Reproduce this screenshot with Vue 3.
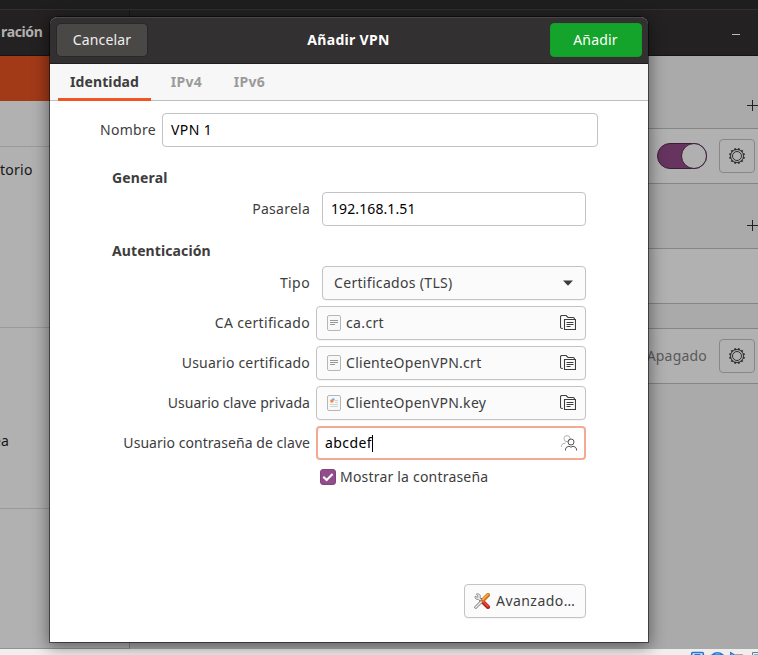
<script setup>
const files = [
  { label: 'CA certificado', name: 'ca.crt', l: 'l-ca', n: 'n-ca' },
  { label: 'Usuario certificado', name: 'ClienteOpenVPN.crt', l: 'l-uc', n: 'n-crt' },
  { label: 'Usuario clave privada', name: 'ClienteOpenVPN.key', l: 'l-uk', n: 'n-key', key: true },
]
const teeth = Array.from({ length: 12 }, (_, i) => i * 30)
</script>

<template>
  <div class="screen">
    <div class="topbar"></div>
    <div class="titlebar">
      <div class="title-side"><span class="t t-conf">ración</span></div>
      <div class="title-main"><i class="minimize"></i></div>
    </div>
    <div class="window">
      <aside class="sidebar">
        <div class="side-row selected"></div>
        <div class="side-row r1"></div>
        <div class="side-row r2"><span class="t t-torio">torio</span></div>
        <div class="side-row r3"><span class="t">ea</span></div>
        <div class="side-row r4"></div>
      </aside>
      <main class="content">
        <div class="gap g1"><svg class="plus" viewBox="0 0 11 11"><path d="M0 5.5H11M5.5 0V11" /></svg></div>
        <div class="band">
          <div class="switch"><i></i></div>
          <div class="gear-btn">
            <svg viewBox="0 0 18 18"><rect v-for="a in teeth" :key="a" x="8" y="1.1" width="2" height="1.6" class="tooth" :transform="`rotate(${a + 15} 9 9)`" /><circle cx="9" cy="9" r="6.5" /><circle cx="9" cy="9" r="4.5" /></svg>
          </div>
        </div>
        <div class="gap g2"><svg class="plus" viewBox="0 0 11 11"><path d="M0 5.5H11M5.5 0V11" /></svg></div>
        <div class="band"></div>
        <div class="gap g3"></div>
        <div class="band">
          <span class="t t-off">Apagado</span>
          <div class="gear-btn">
            <svg viewBox="0 0 18 18"><rect v-for="a in teeth" :key="a" x="8" y="1.1" width="2" height="1.6" class="tooth" :transform="`rotate(${a + 15} 9 9)`" /><circle cx="9" cy="9" r="6.5" /><circle cx="9" cy="9" r="4.5" /></svg>
          </div>
        </div>
      </main>
    </div>
    <footer class="status">
      <svg viewBox="0 0 70 6">
        <path d="M3.7 6V4.5Q3.7 3.5 4.7 3.5H14.3Q15.3 3.5 15.3 4.5V6" fill="#d5e7fb" stroke="#2477d4" stroke-width="1.6" />
        <path d="M6.5 5.5H12.5" fill="none" stroke="#2477d4" />
        <path d="M24 6Q29.5 1.5 35 6Z" fill="#9feaff" stroke="#2477d4" stroke-width="1.5" />
        <path d="M42.7 6V3.7L46.5 6" fill="#7fd6fb" stroke="#2477d4" stroke-width="1.4" />
        <path d="M47 5.5H55" stroke="#aaa" />
        <path d="M64.5 6V3.5H70" fill="none" stroke="#6f7b82" /><path d="M66 5H70V6H66Z" fill="#51c4e8" />
      </svg>
    </footer>

    <section class="dialog">
      <header class="head">
        <button class="cancel"><span class="t t-cancel">Cancelar</span></button>
        <h1 class="t t-title">Añadir VPN</h1>
        <button class="add"><span class="t t-add">Añadir</span></button>
      </header>
      <nav class="tabs">
        <span class="tab active"><span class="t t-id">Identidad</span></span>
        <span class="tab v4"><span class="t t-ip">IPv4</span></span>
        <span class="tab v6"><span class="t t-ip">IPv6</span></span>
      </nav>
      <div class="form">
        <div class="row name-row">
          <label class="t l-nom">Nombre</label>
          <div class="field name"><span class="t n-vpn">VPN 1</span></div>
        </div>
        <h2 class="t h-gen">General</h2>
        <div class="row gateway">
          <label class="t l-pas">Pasarela</label>
          <div class="field short"><span class="t n-gw">192.168.1.51</span></div>
        </div>
        <h2 class="t h-auth">Autenticación</h2>
        <div class="row">
          <label class="t l-tipo">Tipo</label>
          <div class="field short button select"><span class="t n-tls">Certificados (TLS)</span><svg class="arrow" viewBox="0 0 10 6"><path d="M0 0.5H10L5 5.8Z" /></svg></div>
        </div>
        <div v-for="f in files" :key="f.label" class="row">
          <label class="t" :class="f.l">{{ f.label }}</label>
          <div class="field button file">
            <svg class="doc" viewBox="0 0 14 16">
              <rect x="0.5" y="0.5" width="13" height="15" rx="1.5" />
              <template v-if="f.key">
                <path class="faint" d="M8 5.5H11M8 7.5H11M3 9.5H11M3 11.5H11" />
                <circle cx="4.9" cy="6" r="1.8" fill="#f58a4b" /><path d="M5.5 3A2.5 2.5 0 0 1 7.8 5.2H5.5Z" fill="#57aee0" />
              </template>
              <path v-else class="text-lines" d="M3 5.5H11M3 7.5H11M3 9.5H8" />
            </svg>
            <span class="t" :class="f.n">{{ f.name }}</span>
            <svg class="folder" viewBox="0 0 16 16"><path d="M2.8 13.5H2Q0.5 13.5 0.5 12V2Q0.5 0.5 2 0.5H6L8 2.5H13Q14.5 2.5 14.5 4" /><path d="M4.5 4.5H15.5V14.5H4.5Z" /><path d="M6.5 7.5H13.5M6.5 9.5H13.5M6.5 11.5H10.5" /></svg>
          </div>
        </div>
        <div class="row">
          <label class="t l-pw">Usuario contraseña de clave</label>
          <div class="field password"><span class="t n-pw">abcdef</span><i class="caret"></i>
            <svg class="people" viewBox="0 0 16 16"><g class="back"><circle cx="6" cy="3.6" r="3" /><path d="M.5 12V10.5Q.8 8.5 4.5 8" /></g><circle cx="10" cy="7" r="3" /><path d="M4.5 15.5V14Q5 11.7 8 11.2Q10 13.2 12 11.2Q15 11.7 15.5 14V15.5" /></svg>
          </div>
        </div>
        <div class="check-row"><span class="check"><svg viewBox="0 0 14 14"><path d="M2.3 6.8L5.6 10L11.6 4" /></svg></span><span class="t t-show">Mostrar la contraseña</span></div>
        <button class="field button advanced">
          <svg class="tools" viewBox="0 0 16 16">
            <path d="M7 7L14 14" stroke="#b4201c" stroke-width="4" stroke-linecap="round" /><path d="M7.5 6.8L14 13.3" stroke="#ee473b" stroke-width="1.8" stroke-linecap="round" />
            <path d="M1.8 14.2L8 8" stroke="#777" stroke-width="3" stroke-linecap="round" /><path d="M1.8 14.2L8 8" stroke="#eee" stroke-width="1.5" stroke-linecap="round" />
            <path d="M9 7L14 2" stroke="#cd7018" stroke-width="4" stroke-linecap="round" /><path d="M9 6.3L13.8 1.6" stroke="#f5a54a" stroke-width="2" stroke-linecap="round" />
            <path d="M1 3.2L3.5 4.3L4 3L2.2 1Q5 0 6.3 2.3Q6.7 4 6 5L7.5 6.5L6 8L4.5 6.5Q1 7 1 3.2Z" fill="#e5e5e3" stroke="#838383" stroke-width=".8" />
          </svg>
          <span class="t t-adv">Avanzado…</span>
        </button>
      </div>
    </section>
  </div>
</template>

<style>
body { margin: 0; overflow: hidden; }
</style>
<style scoped>
* { box-sizing: border-box; }
.screen { position: relative; width: 758px; height: 655px; overflow: hidden; display: flex; flex-direction: column; background: #aaa; font-family: "Noto Sans", "Open Sans", sans-serif; font-size: 14px; line-height: 20px; color: #3d3d3d; }
.t { white-space: nowrap; display: inline-block; }
h1, h2 { margin: 0; font-size: 14px; font-weight: 700; line-height: 20px; }
button { font: inherit; padding: 0; margin: 0; }
.topbar { height: 9px; background: #1e1e1e; flex: none; }
.titlebar { height: 47px; flex: none; display: flex; background: #232122; border-top: 1px solid #303030; border-bottom: 1px solid #151515; }
.title-side { width: 130px; border-right: 1px solid #171717; display: flex; align-items: flex-start; padding-top: 12px; color: #b2b0ae; font-weight: 700; }
.t-conf { letter-spacing: -.35px; padding-left: 1px; }
.title-main { flex: 1; display: flex; justify-content: flex-end; padding: 24px 18px 0 0; }
.minimize { width: 8px; height: 1px; background: #bbb; }
.window { flex: 1; display: flex; min-height: 0; }
.sidebar { width: 130px; background: #b1b1b1; border-right: 1px solid #858585; border-bottom: 1px solid #929292; color: #161616; flex: none; }
.side-row { display: flex; border-bottom: 1px solid #9a9a9a; }
.selected { height: 45px; background: #a23a18; border: 0; }
.r1 { height: 46px; }
.r2 { height: 181px; padding-top: 13px; }
.t-torio { letter-spacing: .25px; }
.r3 { height: 181px; padding-top: 103px; }
.r3 .t { margin-left: -7px; }
.r4 { border: 0; }
.content { flex: 1; background: #aaa; }
.gap { display: flex; justify-content: flex-end; }
.g1 { height: 72px; padding-top: 44px; }
.g2 { height: 64px; padding-top: 36px; }
.g3 { height: 24px; }
.plus { width: 11px; height: 11px; stroke: #222; fill: none; }
.band { height: 56px; background: #b1b1b1; border-top: 1px solid #858585; border-bottom: 1px solid #858585; display: flex; align-items: center; justify-content: flex-end; gap: 12px; padding-right: 3px; }
.switch { width: 50px; height: 26px; border-radius: 13px; background: #66345f; border: 1px solid #3d1c38; display: flex; justify-content: flex-end; }
.switch i { width: 26px; height: 26px; margin: -1px -1px 0 0; border-radius: 50%; background: #b0b0b0; border: 1px solid #3d1c38; }
.gear-btn { width: 36px; height: 34px; border: 1px solid #878787; border-radius: 4px; display: flex; align-items: center; justify-content: center; }
.gear-btn svg { width: 18px; height: 18px; fill: none; stroke: #2d2d2d; stroke-width: 1; }
.gear-btn .tooth { fill: #2d2d2d; stroke: none; }
.t-off { color: #5a5a5a; letter-spacing: .2px; }
.status { height: 6px; background: #efefef; display: flex; justify-content: flex-end; flex: none; }
.status svg { width: 70px; height: 6px; }
.dialog { position: absolute; left: 50px; top: 17px; width: 598px; height: 625px; background: #fff; border-radius: 8px 8px 0 0; box-shadow: 0 0 0 1px rgba(0,0,0,.5), 0 3px 16px 2px rgba(0,0,0,.45); }
.head { height: 47px; border-radius: 7px 7px 0 0; background: #333031; border-top: 1px solid #484646; border-bottom: 1px solid #1f1d1e; display: flex; align-items: center; justify-content: space-between; padding: 0 6px 1px 7px; color: #fff; }
.cancel { width: 90px; height: 32px; border: 0; border-radius: 4px; background: #4a4847; color: #f1efed; box-shadow: 0 0 0 1px #292728; }
.t-cancel { letter-spacing: .15px; }
.add { width: 92px; height: 34px; border: 1px solid #159c2b; border-radius: 4px; background: #14a32b; color: #fff; }
.t-title { letter-spacing: .3px; }
.t-add { letter-spacing: .2px; margin-left: -1px; }
.tabs { height: 37px; background: #f7f7f7; border-bottom: 1px solid #c0bfbf; display: flex; padding-left: 8px; font-weight: 700; color: #9b9b9b; }
.tab { height: 37px; display: flex; justify-content: center; padding-top: 8px; }
.active { width: 93px; border-bottom: 3px solid #f15523; color: #3d3d3d; }
.t-id { letter-spacing: .12px; }
.t-ip { letter-spacing: .3px; }
.v4 { width: 71px; }
.v6 { width: 55px; }
.form { padding: 12px 62px 0 0; display: flex; flex-direction: column; align-items: flex-end; }
.row { display: flex; align-items: center; justify-content: flex-end; gap: 6px; height: 34px; margin-bottom: 6px; }
.name-row { margin: 0 -12px 0 0; }
.field { height: 34px; width: 270px; border: 1px solid #c3c3c3; border-radius: 4px; background: #fff; display: flex; align-items: center; padding: 0 8px; color: #000; }
.name { width: 436px; }
.short { width: 264px; margin-left: 6px; }
.button { background: #fbfbfb; color: #3d3d3d; box-shadow: 0 1px 1px rgba(0,0,0,.04); }
h2 { align-self: flex-start; margin-left: 62px; }
.h-gen { margin-top: 21px; margin-bottom: 4px; letter-spacing: .15px; }
.gateway { margin-bottom: 15px; }
.h-auth { margin-bottom: 5px; letter-spacing: .1px; }
.l-nom { letter-spacing: .3px; }
.l-pas { letter-spacing: .25px; }
.l-tipo { letter-spacing: .4px; }
.l-ca { letter-spacing: .33px; }
.l-uc { letter-spacing: .22px; }
.l-uk, .l-pw { letter-spacing: .05px; }
.n-vpn { letter-spacing: .4px; }
.n-gw { letter-spacing: .1px; }
.n-tls { letter-spacing: .32px; }
.n-ca { letter-spacing: .35px; }
.n-crt, .n-key { letter-spacing: .28px; }
.n-pw { letter-spacing: .4px; }
.t-show { letter-spacing: .2px; }
.t-adv { letter-spacing: .45px; }
.select { justify-content: space-between; padding: 0 12px 0 11px; }
.arrow { width: 10px; height: 6px; fill: #3d3d3d; }
.file { padding: 0 9px 0 10px; }
.doc { width: 14px; height: 16px; margin-right: 5px; fill: #f8f8f8; stroke: #b6b6b6; }
.doc circle, .doc path { stroke: none; }
.doc .text-lines { stroke: #999; }
.doc .faint { stroke: #c9c9c9; stroke-width: .8; }
.folder { width: 16px; height: 16px; margin-left: auto; fill: none; stroke: #3d3d3d; stroke-width: 1.1; }
.password { border: 2px solid #f4aa90; padding: 0 7px 0 7px; }
.caret { width: 1px; height: 17px; background: #000; }
.people { width: 16px; height: 16px; margin-left: auto; fill: none; stroke: #555; }
.back { stroke: #b0b0b0; }
.check-row { display: flex; align-items: center; gap: 4px; align-self: flex-start; margin-left: 270px; height: 22px; }
.check { width: 16px; height: 16px; border-radius: 3px; background: #924d8b; border: 1px solid #84417d; display: flex; }
.check svg { width: 14px; height: 14px; fill: none; stroke: #fff; stroke-width: 2; }
.advanced { width: 122px; margin-top: 96px; padding: 0 9px; }
.tools { width: 16px; height: 16px; margin-right: 6px; fill: none; flex: none; }
</style>
